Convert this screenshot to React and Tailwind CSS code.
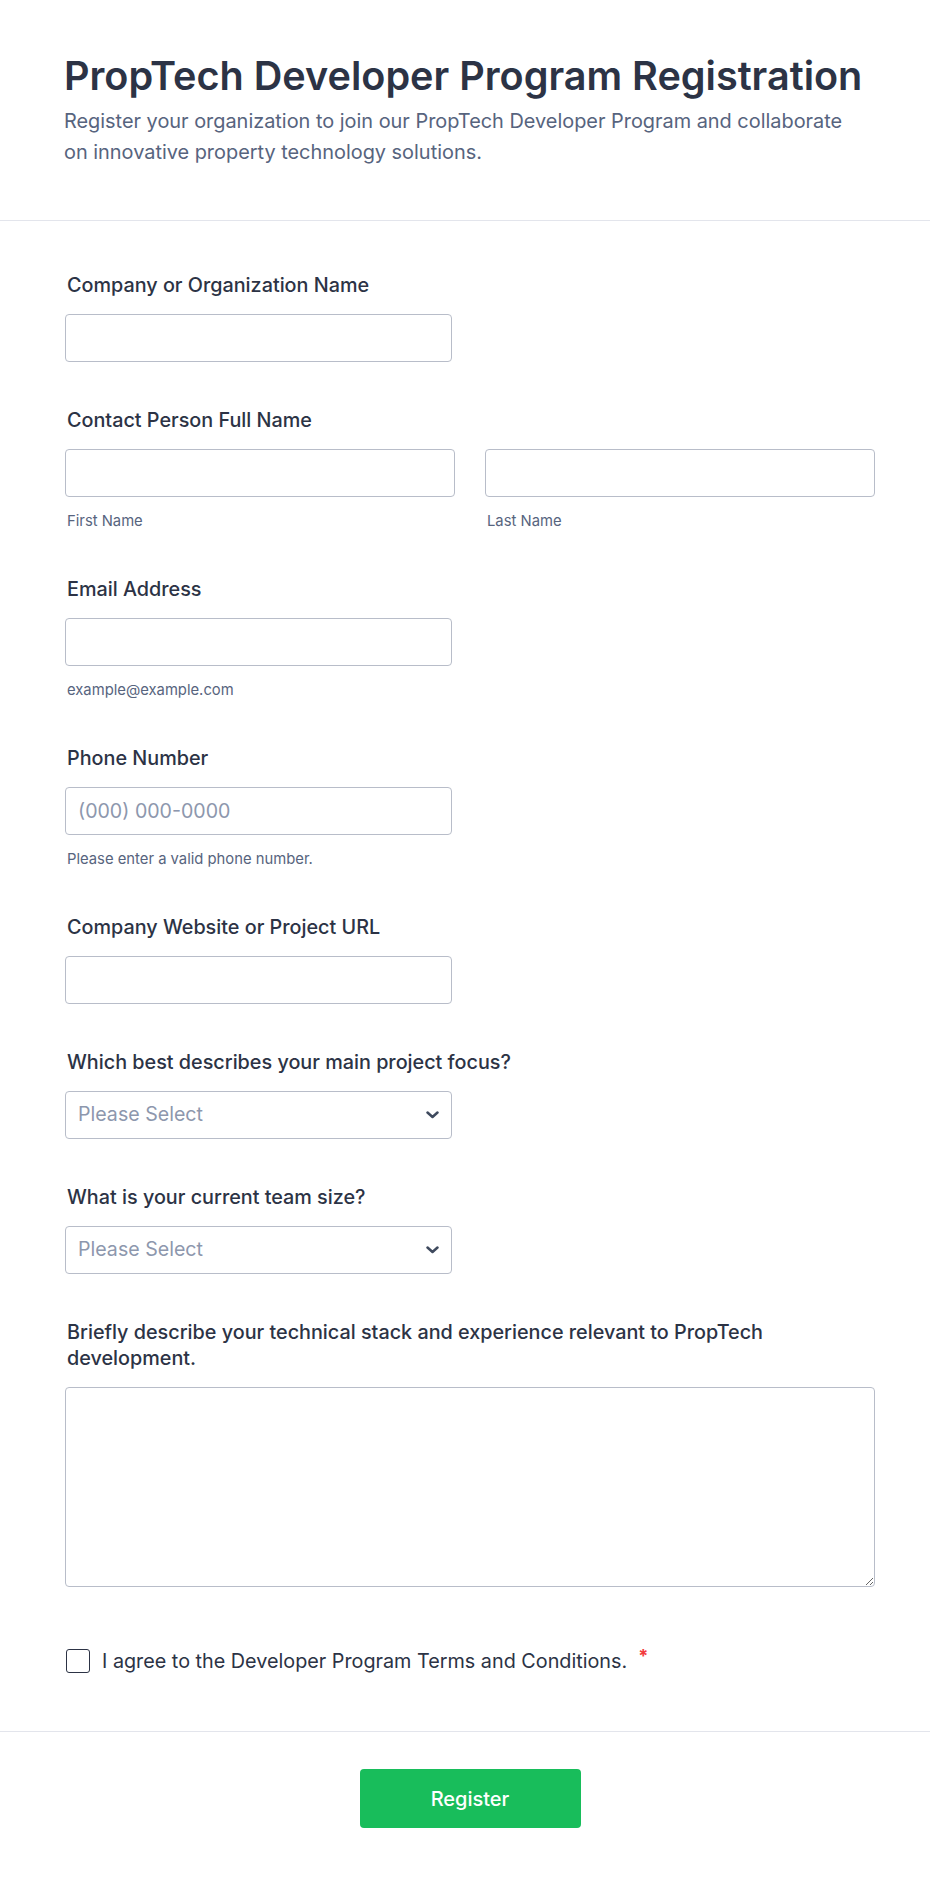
import React from 'react';

const Label = ({ children }) => (
  <label className="block ml-[2px] mb-4 text-[19.8px] leading-[26px] font-medium text-[#2c3345]">{children}</label>
);

const Sub = ({ children }) => (
  <div className="ml-[2px] mt-[14px] text-[14.8px] leading-[20px] text-[#57647e]">{children}</div>
);

const inputCls =
  'block h-[48px] rounded-[4px] border border-[#b8bdc9] bg-white px-[12px] text-[19.6px] text-[#2c3345] placeholder:text-[#8d97ad] outline-none';

const Select = () => (
  <div className="relative w-[387px]">
    <select
      defaultValue=""
      className="block w-full h-[48px] appearance-none rounded-[4px] border border-[#b8bdc9] bg-white pl-[12px] pr-10 text-[19.6px] text-[#8d97ad] outline-none"
    >
      <option value="" disabled>
        Please Select
      </option>
    </select>
    <svg
      className="pointer-events-none absolute right-[13px] top-1/2 -translate-y-1/2"
      width="13"
      height="8"
      viewBox="0 0 13 8"
      fill="none"
    >
      <path d="M1.5 1.5L6.5 6L11.5 1.5" stroke="#3f4a5e" strokeWidth="2.5" strokeLinecap="round" strokeLinejoin="round" />
    </svg>
  </div>
);

export default function App() {
  return (
    <div className="min-h-screen w-full bg-white font-[Inter,sans-serif]">
      {/* header */}
      <div className="border-b border-[#e3e5ec] pl-[64px] pr-[55px] pt-[52px] pb-[52px]">
        <h1 className="text-[39.6px] leading-[48px] font-semibold text-[#2c3345]">
          PropTech Developer Program Registration
        </h1>
        <p className="mt-[6px] w-[795px] text-[19.9px] leading-[31px] text-[#57647e]">
          Register your organization to join our PropTech Developer Program and collaborate on innovative property
          technology solutions.
        </p>
      </div>

      {/* form body */}
      <div className="border-b border-[#e3e5ec] pl-[65px] pr-[55px] pt-[51px] pb-[57px]">
        <div className="flex flex-col gap-[45px]">
          <div>
            <Label>Company or Organization Name</Label>
            <input type="text" className={`${inputCls} w-[387px]`} />
          </div>

          <div>
            <Label>Contact Person Full Name</Label>
            <div className="grid grid-cols-2 gap-[30px]">
              <div>
                <input type="text" className={`${inputCls} w-full`} />
                <Sub>First Name</Sub>
              </div>
              <div>
                <input type="text" className={`${inputCls} w-full`} />
                <Sub>Last Name</Sub>
              </div>
            </div>
          </div>

          <div>
            <Label>Email Address</Label>
            <input type="email" className={`${inputCls} w-[387px]`} />
            <Sub>example@example.com</Sub>
          </div>

          <div>
            <Label>Phone Number</Label>
            <input type="tel" placeholder="(000) 000-0000" className={`${inputCls} w-[387px]`} />
            <Sub>Please enter a valid phone number.</Sub>
          </div>

          <div>
            <Label>Company Website or Project URL</Label>
            <input type="text" className={`${inputCls} w-[387px]`} />
          </div>

          <div>
            <Label>Which best describes your main project focus?</Label>
            <Select />
          </div>

          <div>
            <Label>What is your current team size?</Label>
            <Select />
          </div>

          <div>
            <Label>Briefly describe your technical stack and experience relevant to PropTech development.</Label>
            <textarea className="block w-full h-[200px] rounded-[4px] border border-[#b8bdc9] bg-white p-[12px] text-[19.6px] text-[#2c3345] outline-none" />
          </div>
        </div>

        <label className="mt-[61px] flex h-[26px] items-center">
          <span className="h-[24px] w-[24px] shrink-0 rounded-[3px] border-[1.5px] border-[#2c3345] bg-white ml-[1px]" />
          <span className="ml-[12px] text-[19.8px] leading-[26px] text-[#2c3345]">
            I agree to the Developer Program Terms and Conditions.
          </span>
          <span className="ml-[11px] self-start -mt-[2px] text-[18px] font-bold leading-[20px] text-[#f23a3c]">*</span>
        </label>
      </div>

      {/* footer */}
      <div className="pl-[65px] pr-[55px] pt-[37px] pb-[50px]">
        <div className="flex justify-center">
          <button
            type="button"
            className="h-[59px] w-[221px] rounded-[4px] bg-[#18bd5b] text-[20px] font-medium text-white"
          >
            Register
          </button>
        </div>
      </div>
    </div>
  );
}
